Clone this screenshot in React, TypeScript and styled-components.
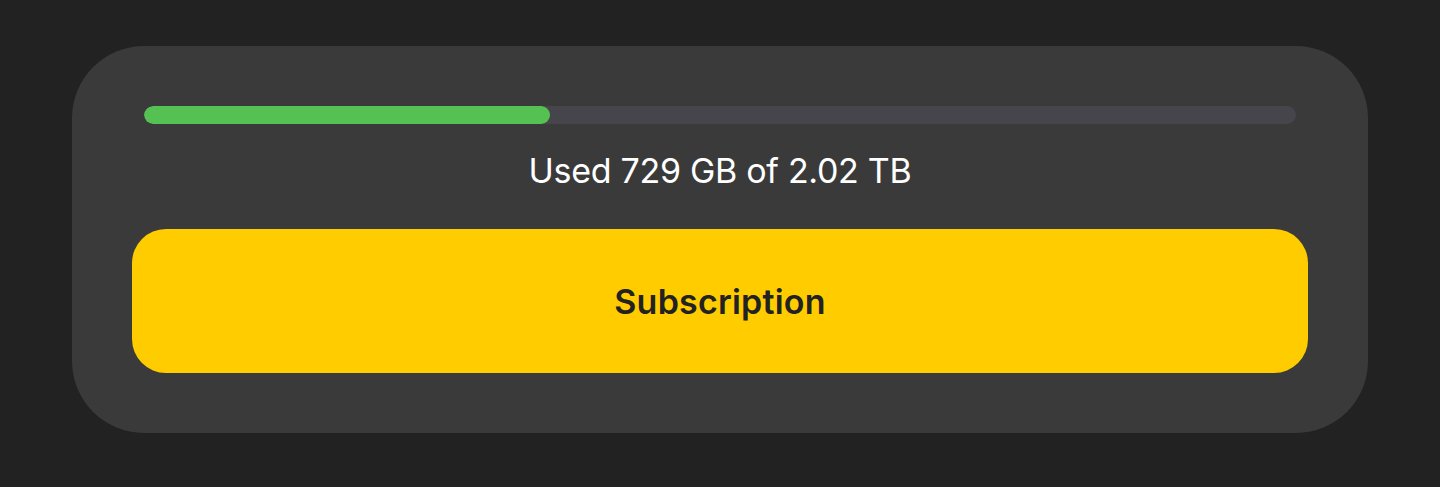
import React from "react";
import styled, { createGlobalStyle } from "styled-components";

const Global = createGlobalStyle`
  html, body { margin: 0; padding: 0; background: #222222; }
  body { font-family: Inter, "Noto Sans", sans-serif; }
`;

const Page = styled.div`
  width: 1440px;
  height: 487px;
  box-sizing: border-box;
  padding: 46px 72px 0;
  background: #222222;
`;

const Card = styled.section`
  box-sizing: border-box;
  height: 387px;
  background: #3a3a3a;
  border-radius: 72px;
  padding: 60px;
  display: flex;
  flex-direction: column;
  align-items: stretch;
`;

const Track = styled.div`
  margin: 0 12px;
  height: 18px;
  border-radius: 9px;
  background: #46454b;
  overflow: hidden;
`;

const Fill = styled.div`
  height: 100%;
  border-radius: 9px;
  background: #55c152;
`;

const Usage = styled.p`
  margin: 25px 0 0;
  height: 44px;
  line-height: 44px;
  text-align: center;
  color: #ffffff;
  font-size: 34px;
  font-weight: 400;
  letter-spacing: -0.3px;
`;

const Button = styled.button`
  margin-top: 36px;
  height: 144px;
  border: none;
  border-radius: 34px;
  background: #ffcc00;
  color: #222222;
  font-family: Inter, "Noto Sans", sans-serif;
  font-size: 34px;
  font-weight: 600;
  letter-spacing: 0.2px;
  padding-top: 2px;
  cursor: pointer;
`;

export default function App() {
  const used = 729;
  const total = 2068;
  return (
    <>
      <Global />
      <Page>
        <Card>
          <Track>
            <Fill style={{ width: `${(used / total) * 100}%` }} />
          </Track>
          <Usage>Used 729 GB of 2.02 TB</Usage>
          <Button>Subscription</Button>
        </Card>
      </Page>
    </>
  );
}
